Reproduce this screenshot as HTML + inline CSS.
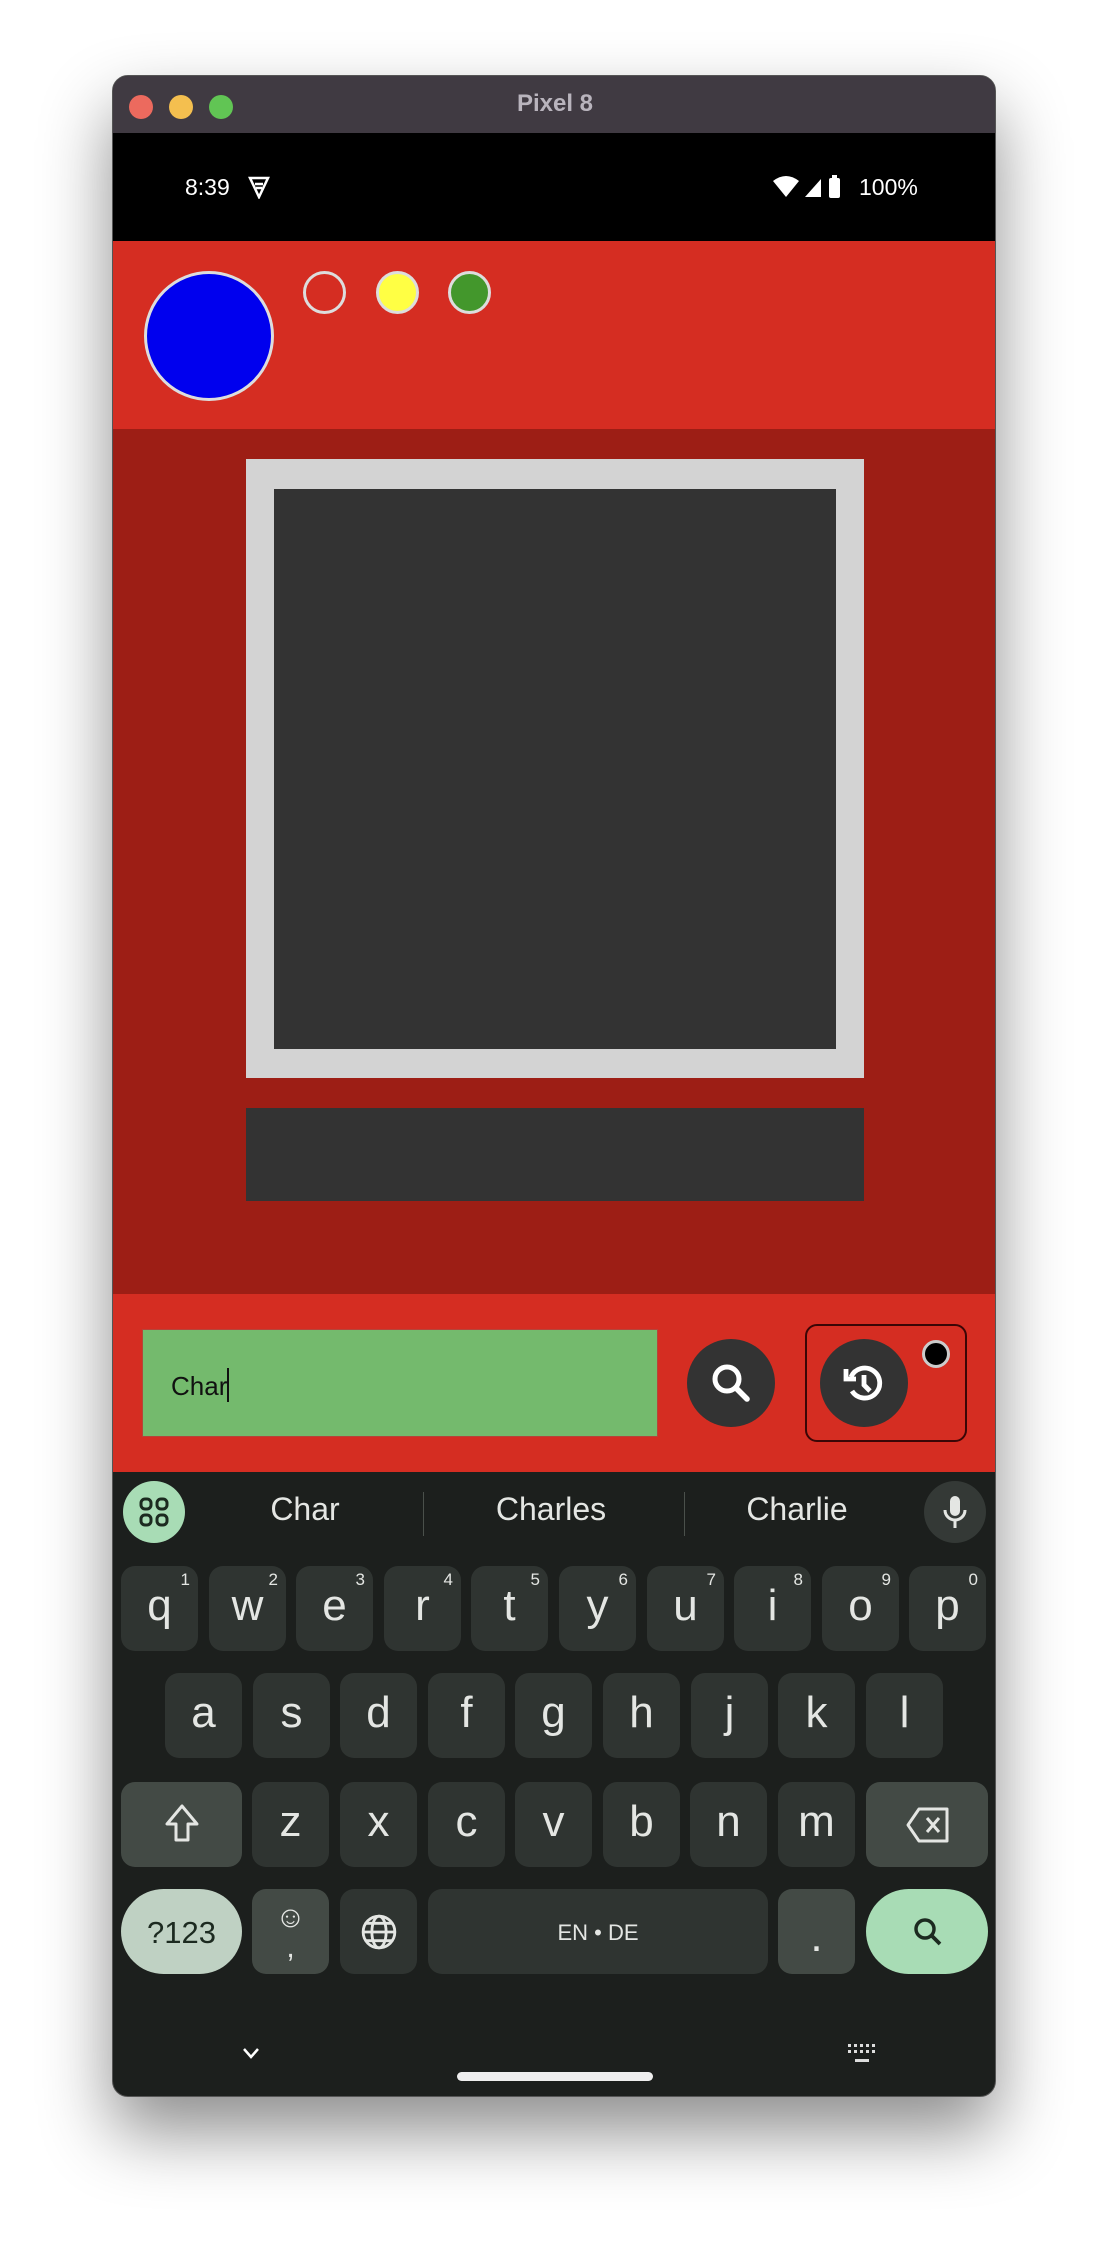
<!DOCTYPE html>
<html><head><meta charset="utf-8"><style>
*{margin:0;padding:0;box-sizing:border-box}
body{width:1108px;height:2246px;background:#fff;position:relative;overflow:hidden;font-family:"Liberation Sans",sans-serif}
.a{position:absolute}
.win{left:112px;top:75px;width:884px;height:2022px;border-radius:16px;background:#1c1f1d;overflow:hidden;box-shadow:0 35px 70px rgba(0,0,0,.45);border:1px solid #555}
.k{position:absolute;width:77px;height:85px;border-radius:14px;background:#2f3431;color:#e4e6e3;font-size:44px;text-align:center;line-height:80px}
.k sup{position:absolute;right:8px;top:-26px;font-size:17px}
.s{background:#434a45}
</style></head><body>
<div class="a win">
 <div class="a" style="left:0;top:0;width:884px;height:57px;background:#403a42"></div>
 <div class="a" style="left:16px;top:19px;width:24px;height:24px;border-radius:50%;background:#ec6a5e"></div>
 <div class="a" style="left:56px;top:19px;width:24px;height:24px;border-radius:50%;background:#f4bf4f"></div>
 <div class="a" style="left:96px;top:19px;width:24px;height:24px;border-radius:50%;background:#61c554"></div>
 <div class="a" style="left:0;top:14px;width:884px;text-align:center;color:#b9b4bd;font-weight:bold;font-size:24px">Pixel 8</div>
 <div class="a" style="left:0;top:57px;width:884px;height:108px;background:#000"></div>
 <div class="a" style="left:72px;top:98px;color:#fff;font-size:23px">8:39</div>
 <svg class="a" style="left:135px;top:99px" width="22" height="24" viewBox="0 0 22 24"><path d="M2 3h18L11 22z" fill="none" stroke="#fff" stroke-width="2.5"/><path d="M7 9h8M8 13h6" stroke="#fff" stroke-width="2.5"/></svg>
 <svg class="a" style="left:660px;top:99px" width="120" height="24" viewBox="0 0 120 24"><path d="M0 6q13-10 26 0L13 22z" fill="#fff"/><path d="M32 22L48 4v18z" fill="#fff"/><rect x="56" y="3" width="11" height="20" rx="2" fill="#fff"/><rect x="59" y="0" width="5" height="4" fill="#fff"/></svg>
 <div class="a" style="left:746px;top:98px;color:#fff;font-size:23px">100%</div>
 <div class="a" style="left:0;top:165px;width:884px;height:188px;background:#d52d22"></div>
 <div class="a" style="left:31px;top:195px;width:130px;height:130px;border-radius:50%;background:#0000ee;border:3px solid #ddd"></div>
 <div class="a" style="left:190px;top:195px;width:43px;height:43px;border-radius:50%;border:3px solid #ddd"></div>
 <div class="a" style="left:263px;top:195px;width:43px;height:43px;border-radius:50%;background:#ffff44;border:3px solid #ddd"></div>
 <div class="a" style="left:335px;top:195px;width:43px;height:43px;border-radius:50%;background:#43972c;border:3px solid #ddd"></div>
 <div class="a" style="left:0;top:353px;width:884px;height:865px;background:#9d1e15"></div>
 <div class="a" style="left:133px;top:383px;width:618px;height:619px;background:#d3d3d3"></div>
 <div class="a" style="left:161px;top:413px;width:562px;height:560px;background:#333"></div>
 <div class="a" style="left:133px;top:1032px;width:618px;height:93px;background:#333"></div>
 <div class="a" style="left:0;top:1218px;width:884px;height:178px;background:#d52d22"></div>
 <div class="a" style="left:29px;top:1253px;width:516px;height:108px;background:#74ba6d;border:1px solid #b5453a"></div>
 <div class="a" style="left:58px;top:1292px;font-size:26px;color:#111">Char<span style="display:inline-block;width:2px;height:34px;background:#111;vertical-align:-7px"></span></div>
 <div class="a" style="left:574px;top:1263px;width:88px;height:88px;border-radius:50%;background:#333"></div>
 <svg class="a" style="left:594px;top:1283px" width="48" height="48" viewBox="0 0 24 24"><circle cx="10" cy="10" r="6" fill="none" stroke="#fff" stroke-width="2.5"/><path d="M14.5 14.5L20 20" stroke="#fff" stroke-width="2.8" stroke-linecap="round"/></svg>
 <div class="a" style="left:692px;top:1248px;width:162px;height:118px;border-radius:12px;border:2px solid #3a0606"></div>
 <div class="a" style="left:707px;top:1263px;width:88px;height:88px;border-radius:50%;background:#333"></div>
 <svg class="a" style="left:727px;top:1283px" width="48" height="48" viewBox="0 0 24 24"><path d="M5.5 9A7.5 7.5 0 1 1 6 16" fill="none" stroke="#fff" stroke-width="2.4"/><path d="M3 5v5h5" fill="none" stroke="#fff" stroke-width="2.4"/><path d="M12 8v5l3 3" fill="none" stroke="#fff" stroke-width="2.4"/></svg>
 <div class="a" style="left:809px;top:1264px;width:28px;height:28px;border-radius:50%;background:#000;border:3px solid #ccc"></div>
 <div class="a" style="left:10px;top:1405px;width:62px;height:62px;border-radius:50%;background:#a8dcb5"></div>
 <svg class="a" style="left:25px;top:1420px" width="32" height="32" viewBox="0 0 32 32" fill="none" stroke="#1c2a20" stroke-width="3"><rect x="3" y="3" width="10" height="10" rx="4"/><rect x="19" y="3" width="10" height="10" rx="4"/><rect x="3" y="19" width="10" height="10" rx="4"/><rect x="19" y="19" width="10" height="10" rx="4"/></svg>
 <div class="a" style="left:112px;top:1415px;width:160px;text-align:center;color:#e4e6e3;font-size:32px">Char</div>
 <div class="a" style="left:358px;top:1415px;width:160px;text-align:center;color:#e4e6e3;font-size:32px">Charles</div>
 <div class="a" style="left:604px;top:1415px;width:160px;text-align:center;color:#e4e6e3;font-size:32px">Charlie</div>
 <div class="a" style="left:310px;top:1416px;width:1px;height:44px;background:#4a504b"></div>
 <div class="a" style="left:571px;top:1416px;width:1px;height:44px;background:#4a504b"></div>
 <div class="a" style="left:811px;top:1405px;width:62px;height:62px;border-radius:50%;background:#343936"></div>
 <svg class="a" style="left:828px;top:1418px" width="28" height="36" viewBox="0 0 28 36"><rect x="9" y="2" width="10" height="20" rx="5" fill="#e4e6e3"/><path d="M4 16a10 10 0 0 0 20 0M14 26v8" fill="none" stroke="#e4e6e3" stroke-width="3"/></svg>
 <div class="k" style="left:8px;top:1490px">q<sup>1</sup></div>
 <div class="k" style="left:96px;top:1490px">w<sup>2</sup></div>
 <div class="k" style="left:183px;top:1490px">e<sup>3</sup></div>
 <div class="k" style="left:271px;top:1490px">r<sup>4</sup></div>
 <div class="k" style="left:358px;top:1490px">t<sup>5</sup></div>
 <div class="k" style="left:446px;top:1490px">y<sup>6</sup></div>
 <div class="k" style="left:534px;top:1490px">u<sup>7</sup></div>
 <div class="k" style="left:621px;top:1490px">i<sup>8</sup></div>
 <div class="k" style="left:709px;top:1490px">o<sup>9</sup></div>
 <div class="k" style="left:796px;top:1490px">p<sup>0</sup></div>
 <div class="k" style="left:52px;top:1597px">a</div>
 <div class="k" style="left:140px;top:1597px">s</div>
 <div class="k" style="left:227px;top:1597px">d</div>
 <div class="k" style="left:315px;top:1597px">f</div>
 <div class="k" style="left:402px;top:1597px">g</div>
 <div class="k" style="left:490px;top:1597px">h</div>
 <div class="k" style="left:578px;top:1597px">j</div>
 <div class="k" style="left:665px;top:1597px">k</div>
 <div class="k" style="left:753px;top:1597px">l</div>
 <div class="k s" style="left:8px;top:1706px;width:121px"></div>
 <svg class="a" style="left:49px;top:1726px" width="40" height="44" viewBox="0 0 40 44"><path d="M20 4L5 22h9v16h12V22h9z" fill="none" stroke="#e4e6e3" stroke-width="3" stroke-linejoin="round"/></svg>
 <div class="k" style="left:139px;top:1706px">z</div>
 <div class="k" style="left:227px;top:1706px">x</div>
 <div class="k" style="left:315px;top:1706px">c</div>
 <div class="k" style="left:402px;top:1706px">v</div>
 <div class="k" style="left:490px;top:1706px">b</div>
 <div class="k" style="left:577px;top:1706px">n</div>
 <div class="k" style="left:665px;top:1706px">m</div>
 <div class="k s" style="left:753px;top:1706px;width:122px"></div>
 <svg class="a" style="left:792px;top:1730px" width="46" height="38" viewBox="0 0 46 38"><path d="M14 3h28v32H14L3 19z" fill="none" stroke="#e4e6e3" stroke-width="3" stroke-linejoin="round"/><path d="M22 12l12 14M34 12L22 26" stroke="#e4e6e3" stroke-width="3"/></svg>
 <div class="k" style="left:8px;top:1813px;width:121px;border-radius:44px;background:#bfd1c3;color:#1c2a20;font-size:31px;line-height:87px">?123</div>
 <div class="k s" style="left:139px;top:1813px;font-size:30px;line-height:30px;padding-top:14px">☺<br>,</div>
 <div class="k" style="left:227px;top:1813px"></div>
 <svg class="a" style="left:247px;top:1837px" width="38" height="38" viewBox="0 0 24 24" fill="none" stroke="#e4e6e3" stroke-width="1.8"><circle cx="12" cy="12" r="10"/><ellipse cx="12" cy="12" rx="4.5" ry="10"/><path d="M2 12h20M4 6.5h16M4 17.5h16"/></svg>
 <div class="k" style="left:315px;top:1813px;width:340px;font-size:22px;line-height:87px">EN • DE</div>
 <div class="k s" style="left:665px;top:1813px;line-height:96px">.</div>
 <div class="k" style="left:753px;top:1813px;width:122px;border-radius:44px;background:#a8dcb5"></div>
 <svg class="a" style="left:797px;top:1838px" width="36" height="36" viewBox="0 0 24 24"><circle cx="10" cy="10" r="6" fill="none" stroke="#1c2a20" stroke-width="2.3"/><path d="M14.5 14.5L20 20" stroke="#1c2a20" stroke-width="2.5"/></svg>
 <svg class="a" style="left:128px;top:1970px" width="20" height="14" viewBox="0 0 20 14"><path d="M3 3l7 8 7-8" fill="none" stroke="#fff" stroke-width="2.5"/></svg>
 <svg class="a" style="left:734px;top:1966px" width="30" height="22" viewBox="0 0 30 22" fill="#ddd"><rect x="1" y="2" width="3" height="3"/><rect x="7" y="2" width="3" height="3"/><rect x="13" y="2" width="3" height="3"/><rect x="19" y="2" width="3" height="3"/><rect x="25" y="2" width="3" height="3"/><rect x="1" y="8" width="3" height="3"/><rect x="7" y="8" width="3" height="3"/><rect x="13" y="8" width="3" height="3"/><rect x="19" y="8" width="3" height="3"/><rect x="25" y="8" width="3" height="3"/><rect x="8" y="17" width="14" height="3"/></svg>
 <div class="a" style="left:344px;top:1996px;width:196px;height:9px;border-radius:5px;background:#eee"></div>
</div>
</body></html>
